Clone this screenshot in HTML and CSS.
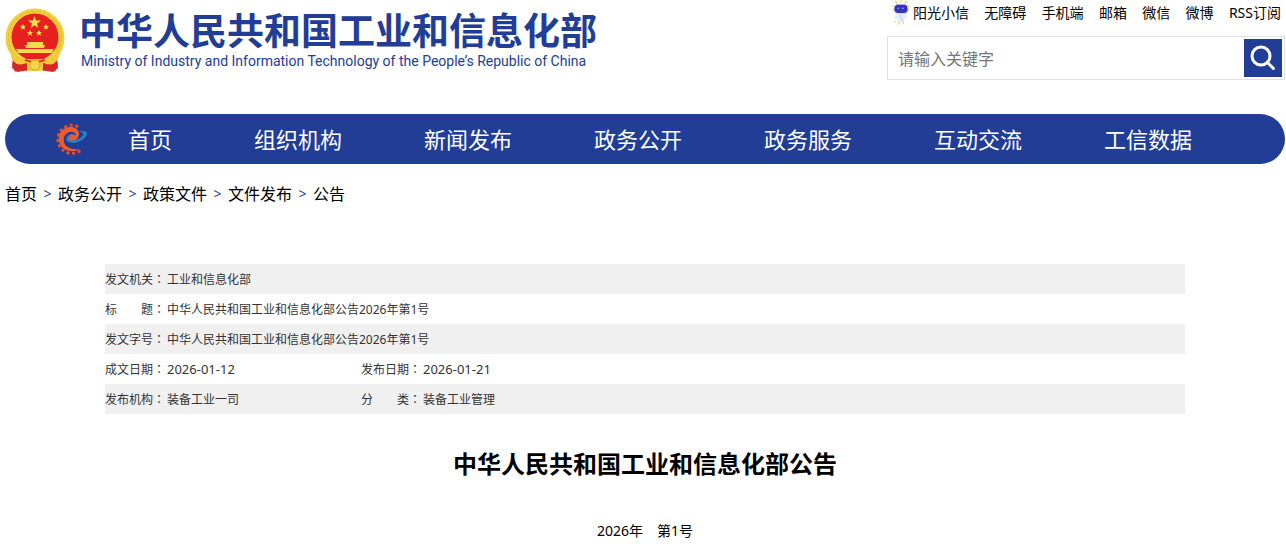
FILE: index.html
```html
<!DOCTYPE html>
<html lang="zh-CN">
<head>
<meta charset="utf-8">
<meta name="viewport" content="width=device-width, initial-scale=1">
<title>中华人民共和国工业和信息化部公告</title>
<link rel="stylesheet" href="styles.css">
</head>
<body>
<div class="page">
  <header class="header">
    <div class="brand">
      <svg class="emblem" viewBox="0 0 60 66" aria-hidden="true">
        <path d="M8 48 L7 60 L12 64 L19 63 L27 60 L33 60 L41 63 L48 64 L53 60 L52 48Z" fill="#d92a28"/>
        <circle cx="30" cy="30" r="29.500" fill="#f2cf3c"/>
        <circle cx="30" cy="30" r="26.500" fill="none" stroke="#e3b52a" stroke-width="1" stroke-dasharray="4 2"/>
        <circle cx="30" cy="29" r="23.500" fill="#e8201f"/>
        <path d="M8 41 Q11 50 18 51 L42 51 Q49 50 52 41 L54 49 Q50 58 40 58 L36 63 H24 L20 58 Q10 58 6 49Z" fill="#efc93a"/>
        <path d="M7 55 Q13 58 22 55 L22 63 L14 60 L10 64Z M53 55 Q47 58 38 55 L38 63 L46 60 L50 64Z" fill="#d92525"/>
        <path d="M20 52 L27 54 M40 52 L33 54" stroke="#e33a26" stroke-width="2"/>
        <path d="M11 41 H49 L47 45 H13Z M22 34 H38 V37 H22Z M20 37 H40 L39 40 H21Z" fill="#f7dc4a"/>
        <circle cx="30" cy="57" r="5" fill="#f6d644" stroke="#d9a81f" stroke-width="1"/>
        <path d="M29.500 8 L31 12.600 L36 12.600 L32 15.500 L33.300 20 L29.500 17.300 L25.700 20 L27 15.500 L23 12.600 L28 12.600Z" fill="#ffe34c"/>
        <g fill="#ffe34c">
          <path d="M18 16 l.9 2 2.100.1 -1.700 1.400 .6 2.200 -1.900-1.300 -1.900 1.300 .6-2.200 -1.700-1.400 2.100-.1z"/>
          <path d="M41 16 l.9 2 2.100.1 -1.700 1.400 .6 2.200 -1.900-1.300 -1.900 1.300 .6-2.200 -1.700-1.400 2.100-.1z"/>
          <path d="M25 22 l.9 2 2.100.1 -1.700 1.400 .6 2.200 -1.900-1.300 -1.900 1.300 .6-2.200 -1.700-1.400 2.100-.1z"/>
          <path d="M34 22 l.9 2 2.100.1 -1.700 1.400 .6 2.200 -1.900-1.300 -1.900 1.300 .6-2.200 -1.700-1.400 2.100-.1z"/>
        </g>
      </svg>
      <div class="brand-text">
        <div class="brand-cn">中华人民共和国工业和信息化部</div>
        <div class="brand-en" lang="en">Ministry of Industry and Information Technology of the People’s Republic of China</div>
      </div>
    </div>
    <div class="tools">
      <nav class="links" aria-label="快捷链接">
        <a class="assistant" href="#"><svg class="robot" viewBox="0 0 20 28" aria-hidden="true">
          <path d="M10 0v3M4 1l2 3M16 1l-2 3M1 6l2 1M19 6l-2 1M1 11l2-1M19 11l-2-1" stroke="#f8d64c" stroke-width="1.500"/>
          <path d="M5 14 Q10 11 15 14 L17 20 L14 19 L13 25 L10 24 L7 26 L5 19 L2 21Z" fill="#e5edfa"/>
          <path d="M9 16 L12 23" stroke="#b8cdea"/>
          <rect x="2" y="4" width="16" height="11" rx="5" fill="#cbd7f7"/>
          <rect x="3" y="5" width="14" height="9" rx="4" fill="#3931bd"/>
          <circle cx="7" cy="9" r="1" fill="#65a7ff"/><circle cx="12" cy="9" r="1" fill="#65a7ff"/>
          <path d="M3 23l1 1M7 25l1 1M12 24l1 1" stroke="#f7ce45" stroke-width="1.500"/>
        </svg>阳光小信</a>
        <a href="#">无障碍</a><a href="#">手机端</a><a href="#">邮箱</a><a href="#">微信</a><a href="#">微博</a><a href="#">RSS订阅</a>
      </nav>
      <form class="search">
        <input class="search-input" type="text" placeholder="请输入关键字" aria-label="请输入关键字">
        <button class="search-button" type="button" aria-label="搜索">
          <svg class="search-icon" viewBox="0 0 26 26" aria-hidden="true"><circle cx="11" cy="11" r="9" fill="none" stroke="#fff" stroke-width="3"/><path d="M17.500 17.500 L23.500 23.500" stroke="#fff" stroke-width="3" stroke-linecap="round"/></svg>
        </button>
      </form>
    </div>
  </header>

  <nav class="menu" aria-label="主导航">
    <svg class="gear" viewBox="0 0 34 34" aria-hidden="true">
      <path d="M27 29 A14.500 14.500 0 1 1 26 5" fill="none" stroke="#e64a2c" stroke-width="3" stroke-dasharray="3.200 2.600"/>
      <path d="M27 27 C18 33 6 28 5 18 C4 8 13 3 20 5 C29 8 27 18 18 20 C14 21 12 18 14 15 C16 12 21 11 22 14 C23 17 18 18 17 17 C20 18 23 15 22 12 C20 7 10 10 10 18 C10 25 18 29 27 27Z" fill="#f15a29"/>
      <path d="M26 9 C38 7 35 15 27 19 C20 23 11 21 13 16 C14 12 18 12 20 13 C16 15 15 18 19 18 C27 18 35 11 26 9Z" fill="#2680cf"/>
      <path d="M19 13 C15 15 15 18 19 18" fill="none" stroke="#f15a29" stroke-width="2"/>
    </svg>
    <a href="#">首页</a><a href="#">组织机构</a><a href="#">新闻发布</a><a href="#">政务公开</a><a href="#">政务服务</a><a href="#">互动交流</a><a href="#">工信数据</a>
  </nav>

  <nav class="crumbs" aria-label="当前位置">
    <a href="#">首页</a><span class="sep">&gt;</span><a href="#">政务公开</a><span class="sep">&gt;</span><a href="#">政策文件</a><span class="sep">&gt;</span><a href="#">文件发布</a><span class="sep">&gt;</span><a href="#">公告</a>
  </nav>

  <main class="article">
    <table class="meta">
      <tbody>
        <tr><th scope="row">发文机关<span class="colon" lang="zh-TW">：</span></th><td colspan="3">工业和信息化部</td></tr>
        <tr><th scope="row">标　　题<span class="colon" lang="zh-TW">：</span></th><td colspan="3">中华人民共和国工业和信息化部公告2026年第1号</td></tr>
        <tr><th scope="row">发文字号<span class="colon" lang="zh-TW">：</span></th><td colspan="3">中华人民共和国工业和信息化部公告2026年第1号</td></tr>
        <tr><th scope="row">成文日期<span class="colon" lang="zh-TW">：</span></th><td class="first date">2026-01-12</td><th scope="row">发布日期<span class="colon" lang="zh-TW">：</span></th><td class="date">2026-01-21</td></tr>
        <tr><th scope="row">发布机构<span class="colon" lang="zh-TW">：</span></th><td class="first">装备工业一司</td><th scope="row">分　　类<span class="colon" lang="zh-TW">：</span></th><td>装备工业管理</td></tr>
      </tbody>
    </table>
    <h1 class="title">中华人民共和国工业和信息化部公告</h1>
    <p class="issue">2026年　第1号</p>
  </main>
</div>
</body>
</html>
```
FILE: styles.css
```css
* { box-sizing: border-box; }
body {
  margin: 0;
  background: #fff;
  color: #000;
  font-family: "Noto Sans", "Noto Sans CJK SC", sans-serif;
}
a { color: inherit; text-decoration: none; }
.page { padding: 0 1px 0 5px; }

.header { display: flex; justify-content: space-between; height: 114px; }
.brand { display: flex; gap: 14px; padding-top: 8px; }
.emblem { width: 60px; height: 66px; }
.brand-text { padding-top: 1px; color: #213d96; white-space: nowrap; }
.brand-cn { font-size: 37px; line-height: 44px; font-weight: 700; }
.brand-en {
  padding-left: 2px;
  font-family: Roboto, "Noto Sans", sans-serif;
  font-size: 14px;
  line-height: 16px;
}

.tools { width: 398px; }
.links {
  display: flex;
  justify-content: space-between;
  height: 36px;
  padding: 0 4px;
  font-size: 14px;
  line-height: 26px;
  white-space: nowrap;
}
.assistant { display: flex; gap: 2px; }
.robot { width: 20px; height: 26px; }
.search { display: flex; height: 44px; padding: 2px; border: 1px solid #e2e2e2; }
.search-input {
  flex: 1;
  min-width: 0;
  padding: 2px 8px 0;
  border: 0;
  font: inherit;
  font-size: 16px;
}
.search-input::placeholder { color: #757575; }
.search-button {
  display: flex;
  align-items: center;
  justify-content: center;
  width: 38px;
  height: 38px;
  padding: 0;
  border: 0;
  background: #213d96;
}
.search-icon { width: 26px; height: 26px; }

.menu {
  display: flex;
  align-items: center;
  height: 50px;
  padding-left: 49px;
  border-radius: 25px;
  background: #213d96;
  color: #fff;
  font-size: 22px;
  line-height: 50px;
  white-space: nowrap;
}
.gear { width: 33px; height: 34px; }
.menu a { padding: 0 41px; }

.crumbs { display: flex; padding-top: 18px; font-size: 16px; line-height: 24px; }
.sep { width: 21px; color: #213d96; font-size: 14px; text-align: center; }

.article { padding: 58px 100px 0; }
.meta {
  width: 100%;
  border-collapse: collapse;
  color: #333;
  font-size: 12px;
  line-height: 24px;
}
.meta tr { height: 30px; }
.meta tr:nth-child(odd) { background: #f0f0f0; }
.meta th { width: 62px; padding: 0; font-weight: 400; text-align: left; white-space: nowrap; }
.meta td { padding: 2px 0 0; }
.meta .first { width: 194px; }
.meta .date { padding: 0; font-size: 13px; }
.colon { font-family: "Noto Sans CJK TC", sans-serif; }
.title { margin: 30px 0 0; font-size: 24px; line-height: 40px; text-align: center; }
.issue { margin: 37px 0 0; font-size: 14px; line-height: 20px; text-align: center; }
```
